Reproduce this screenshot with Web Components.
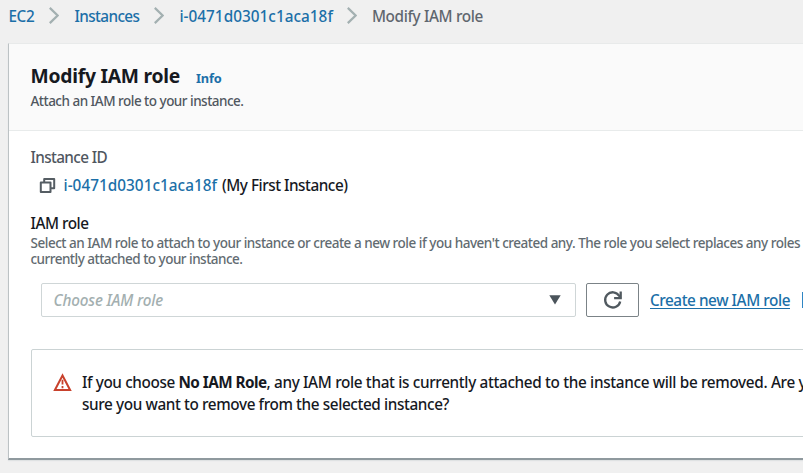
<!DOCTYPE html>
<html lang="en"><head><meta charset="utf-8"><title>Modify IAM role</title>
<style>
html,body{margin:0;height:100%;overflow:hidden}
body{background:#f0f0f0;font:500 15.3px/22px "Noto Sans","Open Sans",sans-serif;color:#16191f}
</style></head><body>
<iam-page></iam-page>
<script>
const define=(name,css,html,init)=>customElements.define(name,class extends HTMLElement{
  constructor(){super();this.attachShadow({mode:'open'}).innerHTML='<style>*{box-sizing:border-box}'+css+'</style>'+html}
  connectedCallback(){if(init)init(this)}
});

/* A single line of text tracked to the measure given in its w attribute. */
define('text-run',':host{display:inline-block;white-space:pre;flex:none}span{display:inline-block;white-space:pre;text-decoration:inherit;text-underline-offset:inherit}','<span><slot></slot></span>',el=>{
  const s=el.shadowRoot.querySelector('span'),w=+el.getAttribute('w'),n=el.textContent.length;
  if(!w)return;
  s.style.letterSpacing='0';
  s.style.letterSpacing=((w-s.getBoundingClientRect().width)/n).toFixed(4)+'px';
});

define('crumb-separator',':host{display:block;width:10px;height:17px;flex:none}svg{display:block}',
'<svg width="10" height="17" viewBox="0 0 10 17" fill="none" stroke="#a3b0b1" stroke-width="2.2"><path d="M.8 .9 8.6 8.5 .8 16.1"/></svg>');

define('crumb-trail',`:host{display:flex;align-items:center;height:43px;padding:0 0 12px 8.4px;color:#1b6fa8}
crumb-separator{margin:0 15px}.last{color:#5f666e}`,
`<text-run w="26">EC2</text-run><crumb-separator></crumb-separator><text-run w="65">Instances</text-run><crumb-separator></crumb-separator><text-run w="153.5">i-0471d0301c1aca18f</text-run><crumb-separator style="margin-left:14px"></crumb-separator><text-run class="last" w="111">Modify IAM role</text-run>`);

define('page-card',`:host{display:block;box-sizing:border-box;margin-left:8px;width:830px;height:417px;background:#fff;border-left:1px solid #bcc2c4;border-top:1px solid #e8eaea;border-bottom:2px solid #8f999e;box-shadow:0 1px 1px #dfe2e3}
header{height:87px;background:#fafafa;border-bottom:1px solid #e8ebeb;padding:19px 0 0 21.5px}
main{padding:15px 0 0 21.5px}`,
'<header><slot name="header"></slot></header><main><slot></slot></main>');

define('card-heading',`:host{display:block}.row{display:flex;align-items:baseline;height:28px;line-height:26px}
.t{font-size:19.3px;font-weight:700;margin-right:16px}.i{font-size:12.8px;font-weight:700;color:#1b6fa8}
.sub{font-size:13.5px;line-height:20px;color:#50575f;display:block}`,
`<div class="row"><text-run class="t" w="149.5">Modify IAM role</text-run><text-run class="i" w="25.5">Info</text-run></div><text-run class="sub" w="213">Attach an IAM role to your instance.</text-run>`);

define('instance-id',`:host{display:block}.k{display:block;color:#50575f;height:24px}
.v{display:flex;align-items:center;height:30px;padding-left:8px}svg{flex:none;margin-right:8px}.id{color:#1b6fa8;margin-right:5px}`,
`<text-run class="k" w="76.5">Instance ID</text-run><div class="v"><svg width="17" height="17" viewBox="0 0 17 17" fill="none" stroke="#555d63" stroke-width="2" stroke-linejoin="round"><path d="M1.8 5.4h9.7v9.6H1.8zM5.2 5.4V1.9h10v9.4h-3.7"/></svg><text-run class="id" w="153.5">i-0471d0301c1aca18f</text-run><text-run w="125.5">(My First Instance)</text-run></div>`);

define('role-select',`:host{display:flex;align-items:center;justify-content:space-between;box-sizing:border-box;width:534.5px;height:34px;border:1.5px solid #cfd6d7;border-radius:2px;padding:0 14px 1px 11.5px;color:#a3afb0;font-style:italic}svg{display:block;flex:none}`,
`<text-run w="109.5">Choose IAM role</text-run><svg width="12" height="10" viewBox="0 0 12 10"><path d="M.3.3h11.4L6 9.6z" fill="#4b545b"/></svg>`);

define('refresh-button',`:host{display:flex;align-items:center;justify-content:center;box-sizing:border-box;width:53px;height:34px;border:1px solid #7b8387;border-radius:2px}svg{display:block}`,
`<svg width="20" height="20" viewBox="0 0 20 20" fill="none" stroke="#50595f" stroke-width="2.3"><path d="M17.2 11.4A7.6 7.6 0 1 1 16.2 5.8L17.4 8"/><path d="M17.7 1.5v6.7h-6.6"/></svg>`);

define('create-link',`:host{display:flex;align-items:center;color:#1b6fa8}.u{height:23px;text-decoration:underline 1.4px;text-underline-offset:2px}svg{display:block;flex:none;margin-left:11.5px}`,
`<text-run class="u" w="140">Create new IAM role</text-run><svg width="16" height="16" viewBox="0 0 16 16" fill="none" stroke="#2f86c4" stroke-width="2"><path d="M9 1H1v14h14V8M10 1h5v5M15 1 8 8"/></svg>`);

define('role-field',`:host{display:block;padding-top:12px}.k{display:block;height:23px}.d{display:block;font-size:13.5px;line-height:16px;height:16px;color:#626b71}
.row{display:flex;align-items:center;padding:16px 0 0 10.5px}refresh-button{margin:0 11px 0 10.5px}`,
`<text-run class="k" w="58">IAM role</text-run><text-run class="d" w="769.5">Select an IAM role to attach to your instance or create a new role if you haven't created any. The role you select replaces any roles</text-run><text-run class="d" w="212">currently attached to your instance.</text-run><div class="row"><role-select></role-select><refresh-button></refresh-button><create-link></create-link></div>`);

define('warning-box',`:host{display:flex;box-sizing:border-box;width:800px;height:88px;margin-top:32px;border:1.5px solid #cbd3d4;border-radius:2px;padding:21px 0 0 21.5px}
svg{display:block;flex:none;margin:2px 10px 0 0}.l{display:flex;height:22px}b{font-weight:700}`,
`<svg width="19" height="19" viewBox="0 0 19 19" fill="none" stroke="#c8412c"><path d="M9.5 2.5 1.9 17h15.2z" stroke-width="2"/><path d="M9.5 6.8v4.7M9.5 13v2.2" stroke-width="1.8"/></svg><div><div class="l"><text-run w="96.5">If you choose </text-run><b><text-run w="88">No IAM Role</text-run></b><text-run w="558">, any IAM role that is currently attached to the instance will be removed. Are you</text-run></div><div class="l"><text-run w="367">sure you want to remove from the selected instance?</text-run></div></div>`);

define('iam-page',':host{display:block}',`<crumb-trail></crumb-trail><page-card><card-heading slot="header"></card-heading><instance-id></instance-id><role-field></role-field><warning-box></warning-box></page-card>`);
</script></body></html>
